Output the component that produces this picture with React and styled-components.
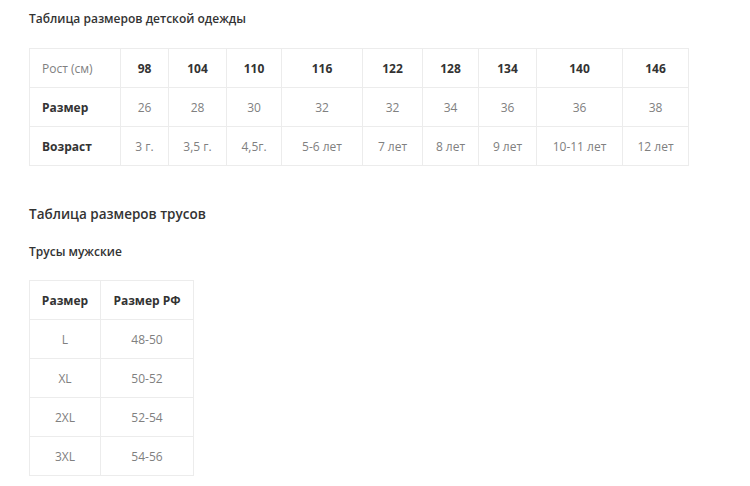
import React from "react"
import styled, { createGlobalStyle } from "styled-components"

const GlobalStyle = createGlobalStyle`
  body {
    margin: 0;
    background: #fff;
    font-family: "Open Sans", "Liberation Sans", sans-serif;
    color: #333;
  }
`

const Page = styled.div`
  padding: 10px 29px;
`

const Title = styled.h3`
  margin: 0;
  font-size: ${props => props.size || 12}px;
  font-weight: 600;
  color: #333;
  line-height: 18px;
  margin-bottom: ${props => props.gap || 0}px;
`

const Table = styled.table`
  border-collapse: collapse;
  table-layout: fixed;
  font-size: 12px;
  margin-bottom: ${props => props.gap || 0}px;
`

const Cell = styled.td`
  border: 1px solid #ececec;
  height: 38px;
  padding: 0;
  color: ${props => (props.bold ? "#333" : "#808080")};
  font-weight: ${props => (props.bold ? 700 : 400)};
  text-align: ${props => props.align || "center"};
  padding-left: ${props => (props.align === "left" ? 12 : 0)}px;
`

const kids = {
  widths: [91, 48, 58, 55, 81, 60, 56, 58, 86, 66],
  rows: [
    { label: "Рост (см)", labelBold: false, bold: true, values: ["98", "104", "110", "116", "122", "128", "134", "140", "146"] },
    { label: "Размер", labelBold: true, values: ["26", "28", "30", "32", "32", "34", "36", "36", "38"] },
    { label: "Возраст", labelBold: true, values: ["3 г.", "3,5 г.", "4,5г.", "5-6 лет", "7 лет", "8 лет", "9 лет", "10-11 лет", "12 лет"] },
  ],
}

const briefs = [
  ["L", "48-50"],
  ["XL", "50-52"],
  ["2XL", "52-54"],
  ["3XL", "54-56"],
]

const App = () => {
  return (
    <>
      <GlobalStyle />
      <Page>
        <Title gap={20}>Таблица размеров детской одежды</Title>
        <Table gap={39}>
          <colgroup>
            {kids.widths.map((w, i) => <col key={i} style={{ width: w }} />)}
          </colgroup>
          <tbody>
            {kids.rows.map(row => (
              <tr key={row.label}>
                <Cell align="left" bold={row.labelBold}>{row.label}</Cell>
                {row.values.map((v, i) => (
                  <Cell key={i} bold={row.bold}>{v}</Cell>
                ))}
              </tr>
            ))}
          </tbody>
        </Table>
        <Title size={13.5} gap={20}>Таблица размеров трусов</Title>
        <Title size={12} gap={19}>Трусы мужские</Title>
        <Table>
          <colgroup>
            <col style={{ width: 71 }} />
            <col style={{ width: 93 }} />
          </colgroup>
          <tbody>
            <tr>
              <Cell bold>Размер</Cell>
              <Cell bold>Размер РФ</Cell>
            </tr>
            {briefs.map(([size, ru]) => (
              <tr key={size}>
                <Cell>{size}</Cell>
                <Cell>{ru}</Cell>
              </tr>
            ))}
          </tbody>
        </Table>
      </Page>
    </>
  )
}

export default App
